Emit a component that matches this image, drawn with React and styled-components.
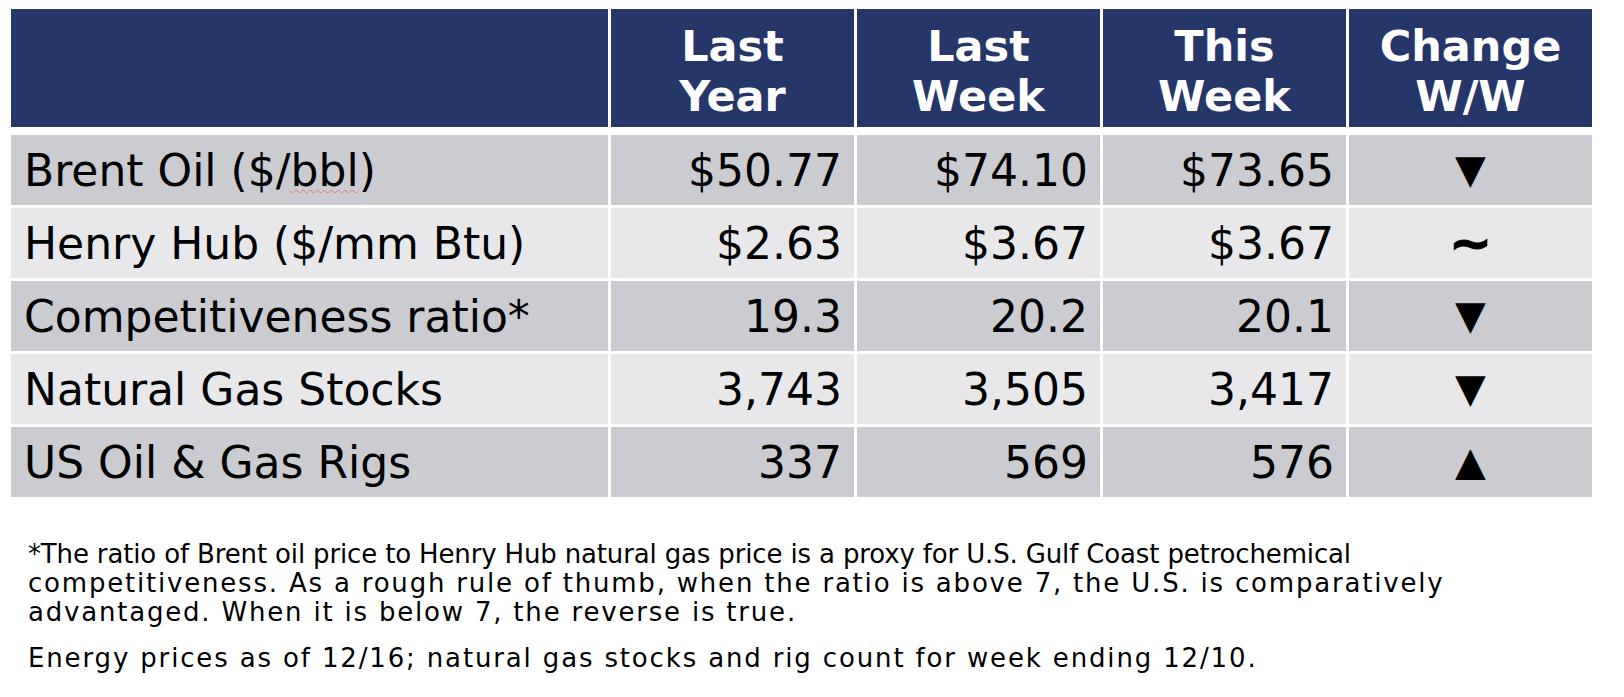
import React from "react";
import styled, { createGlobalStyle } from "styled-components";

const GlobalStyle = createGlobalStyle`
  body {
    margin: 0;
    background: #ffffff;
    font-family: "DejaVu Sans", Verdana, sans-serif;
    color: #000000;
  }
`;

const rows = [
  { label: "Brent Oil ($/", squiggle: "bbl", tail: ")", values: ["$50.77", "$74.10", "$73.65"], change: "down" },
  { label: "Henry Hub ($/mm Btu)", values: ["$2.63", "$3.67", "$3.67"], change: "flat" },
  { label: "Competitiveness ratio*", values: ["19.3", "20.2", "20.1"], change: "down" },
  { label: "Natural Gas Stocks", values: ["3,743", "3,505", "3,417"], change: "down" },
  { label: "US Oil & Gas Rigs", values: ["337", "569", "576"], change: "up" },
];

const headers = [
  ["Last", "Year"],
  ["Last", "Week"],
  ["This", "Week"],
  ["Change", "W/W"],
];

// footnote lines, with the tracking that makes each one sit like the slide's text
const footnote = [
  { text: "*The ratio of Brent oil price to Henry Hub natural gas price is a proxy for U.S. Gulf Coast petrochemical", track: -0.15 },
  { text: "competitiveness. As a rough rule of thumb, when the ratio is above 7, the U.S. is comparatively", track: 1.8 },
  { text: "advantaged. When it is below 7, the reverse is true.", track: 1.8 },
];

const App = () => {
  return (
    <Page>
      <GlobalStyle />
      <Table>
        <HeaderCell />
        {headers.map((h, i) => (
          <HeaderCell key={i}>
            <span>{h[0]}</span>
            <span>{h[1]}</span>
          </HeaderCell>
        ))}

        {rows.map((row, r) => (
          <React.Fragment key={r}>
            <LabelCell $dark={r % 2 === 0}>
              {row.label}
              {row.squiggle && <Squiggle>{row.squiggle}</Squiggle>}
              {row.tail}
            </LabelCell>
            {row.values.map((v, i) => (
              <ValueCell key={i} $dark={r % 2 === 0}>
                {v}
              </ValueCell>
            ))}
            <ChangeCell $dark={r % 2 === 0}>
              {row.change === "flat" ? (
                <Tilde>~</Tilde>
              ) : (
                <Arrow>{row.change === "up" ? "▲" : "▼"}</Arrow>
              )}
            </ChangeCell>
          </React.Fragment>
        ))}
      </Table>

      <Notes>
        <Para>
          {footnote.map((l, i) => (
            <Line key={i} $track={l.track}>
              {l.text}
            </Line>
          ))}
        </Para>
        <Para>
          <Line $track={1.85}>Energy prices as of 12/16; natural gas stocks and rig count for week ending 12/10.</Line>
        </Para>
      </Notes>
    </Page>
  );
};

const Page = styled.main`
  padding: 9px 0 0 11px;
`;

const Table = styled.div`
  display: grid;
  grid-template-columns: 597px repeat(4, 243px);
  column-gap: 3px;
  row-gap: 3px;
`;

const HeaderCell = styled.div`
  height: 118px;
  margin-bottom: 5px;
  background: #253668;
  color: #ffffff;
  font-weight: 700;
  font-size: 43px;
  line-height: 50px;
  display: flex;
  flex-direction: column;
  align-items: center;
  justify-content: center;
  padding-top: 6px;
  box-sizing: border-box;
`;

const Cell = styled.div`
  height: 70px;
  background: ${({ $dark }) => ($dark ? "#cbccd1" : "#e8e8ea")};
  font-size: 44px;
  display: flex;
  align-items: center;
  box-sizing: border-box;
  white-space: nowrap;
`;

const LabelCell = styled(Cell)`
  padding-left: 13px;
`;

const ValueCell = styled(Cell)`
  justify-content: flex-end;
  padding-right: 12px;
`;

const ChangeCell = styled(Cell)`
  justify-content: center;
`;

const Squiggle = styled.span`
  text-decoration: underline wavy #e8727a;
  text-decoration-thickness: 1px;
  text-underline-offset: 3px;
`;

const Arrow = styled.span`
  font-size: 40px;
  line-height: 1;
  margin-top: -3px;
`;

const Tilde = styled.span`
  font-size: 52px;
  font-weight: 700;
  line-height: 1;
  -webkit-text-stroke: 1px #000;
`;

const Notes = styled.div`
  margin-top: 43px;
  padding-left: 17px;
  font-size: 26px;
  line-height: 29px;
  white-space: nowrap;
`;

const Para = styled.p`
  margin: 0 0 17px;
`;

const Line = styled.span`
  display: block;
  letter-spacing: ${({ $track }) => $track}px;
`;

export default App;
